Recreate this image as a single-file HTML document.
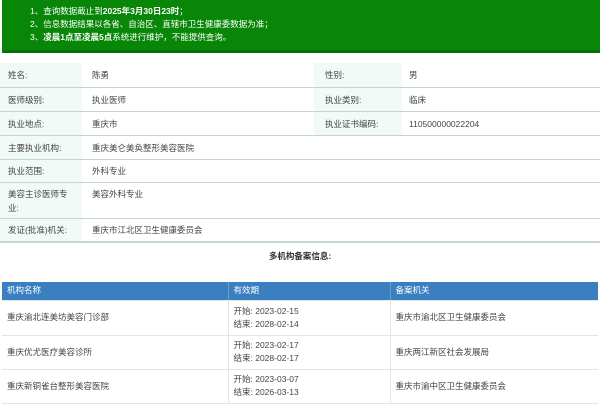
<!DOCTYPE html><html><head><meta charset="utf-8"><style>
*{margin:0;padding:0;box-sizing:border-box}
body{width:600px;height:400px;overflow:hidden;background:#fff;font-family:"Liberation Sans","Noto Sans CJK SC",sans-serif;font-size:8.5px;color:#444}
.ban{position:absolute;left:2px;top:0;width:598px;height:53px;background:#078607;border-bottom:3px solid #06700a;color:#fff;padding:5px 0 0 28px;line-height:13px;font-size:8.5px}
.ban b{font-weight:bold}
.row{position:absolute;left:0;width:600px;border-bottom:1px solid #c5d5cf}
.c{position:absolute;top:0;bottom:0;display:flex;align-items:center}
.lb{background:#f1faf6}
.t{position:absolute;left:2px;top:282px;width:596px;border-collapse:collapse}
.t td{border-bottom:1px solid #e4e4e4;border-left:1px solid #e4e4e4;padding-left:5px;vertical-align:middle;line-height:13px}
.t tr.h td{background:#3a7fc0;color:#fff;height:18px;border-left:1px solid #6a9fd0}
</style></head><body>
<div class="ban">1、查询数据截止到<b>2025年3月30日23时</b>；<br>2、信息数据结果以各省、自治区、直辖市卫生健康委数据为准；<br>3、<b>凌晨1点至凌晨5点</b>系统进行维护，不能提供查询。</div>

<div class="row" style="top:63px;height:25px"><div class="c lb" style="left:0;width:82px;padding-left:8px">姓名:</div><div class="c" style="left:92px">陈勇</div><div class="c lb" style="left:314px;width:88px;padding-left:11px">性别:</div><div class="c" style="left:409px">男</div></div>
<div class="row" style="top:88px;height:24px"><div class="c lb" style="left:0;width:82px;padding-left:8px">医师级别:</div><div class="c" style="left:92px">执业医师</div><div class="c lb" style="left:314px;width:88px;padding-left:11px">执业类别:</div><div class="c" style="left:409px">临床</div></div>
<div class="row" style="top:112px;height:24px"><div class="c lb" style="left:0;width:82px;padding-left:8px">执业地点:</div><div class="c" style="left:92px">重庆市</div><div class="c lb" style="left:314px;width:88px;padding-left:11px">执业证书编码:</div><div class="c" style="left:409px">110500000022204</div></div>
<div class="row" style="top:136px;height:24px"><div class="c lb" style="left:0;width:82px;padding-left:8px">主要执业机构:</div><div class="c" style="left:92px">重庆美仑美奂整形美容医院</div></div>
<div class="row" style="top:160px;height:23px"><div class="c lb" style="left:0;width:82px;padding-left:8px">执业范围:</div><div class="c" style="left:92px">外科专业</div></div>
<div class="row" style="top:183px;height:36px"><div class="c lb" style="left:0;width:82px;padding:4px 0 0 8px;align-items:flex-start;line-height:14px">美容主诊医师专<br>业:</div><div class="c" style="left:92px;align-items:flex-start;padding-top:4px;line-height:14px">美容外科专业</div></div>
<div class="row" style="top:219px;height:24px;border-bottom:2px solid #c5d5cf"><div class="c lb" style="left:0;width:82px;padding-left:8px">发证(批准)机关:</div><div class="c" style="left:92px">重庆市江北区卫生健康委员会</div></div>
<div style="position:absolute;top:250px;left:0;width:600px;text-align:center;font-weight:bold;color:#333">多机构备案信息:</div>

<table class="t">
<tr class="h"><td style="width:226px;border-left:none">机构名称</td><td style="width:162px">有效期</td><td>备案机关</td></tr>
<tr><td style="height:35px;border-left:none">重庆渝北连美坊美容门诊部</td><td>开始: 2023-02-15<br>结束: 2028-02-14</td><td>重庆市渝北区卫生健康委员会</td></tr>
<tr><td style="height:34px;border-left:none">重庆优尤医疗美容诊所</td><td>开始: 2023-02-17<br>结束: 2028-02-17</td><td>重庆两江新区社会发展局</td></tr>
<tr><td style="height:34px;border-left:none">重庆新铜雀台整形美容医院</td><td>开始: 2023-03-07<br>结束: 2026-03-13</td><td>重庆市渝中区卫生健康委员会</td></tr>
</table>
</body></html>
